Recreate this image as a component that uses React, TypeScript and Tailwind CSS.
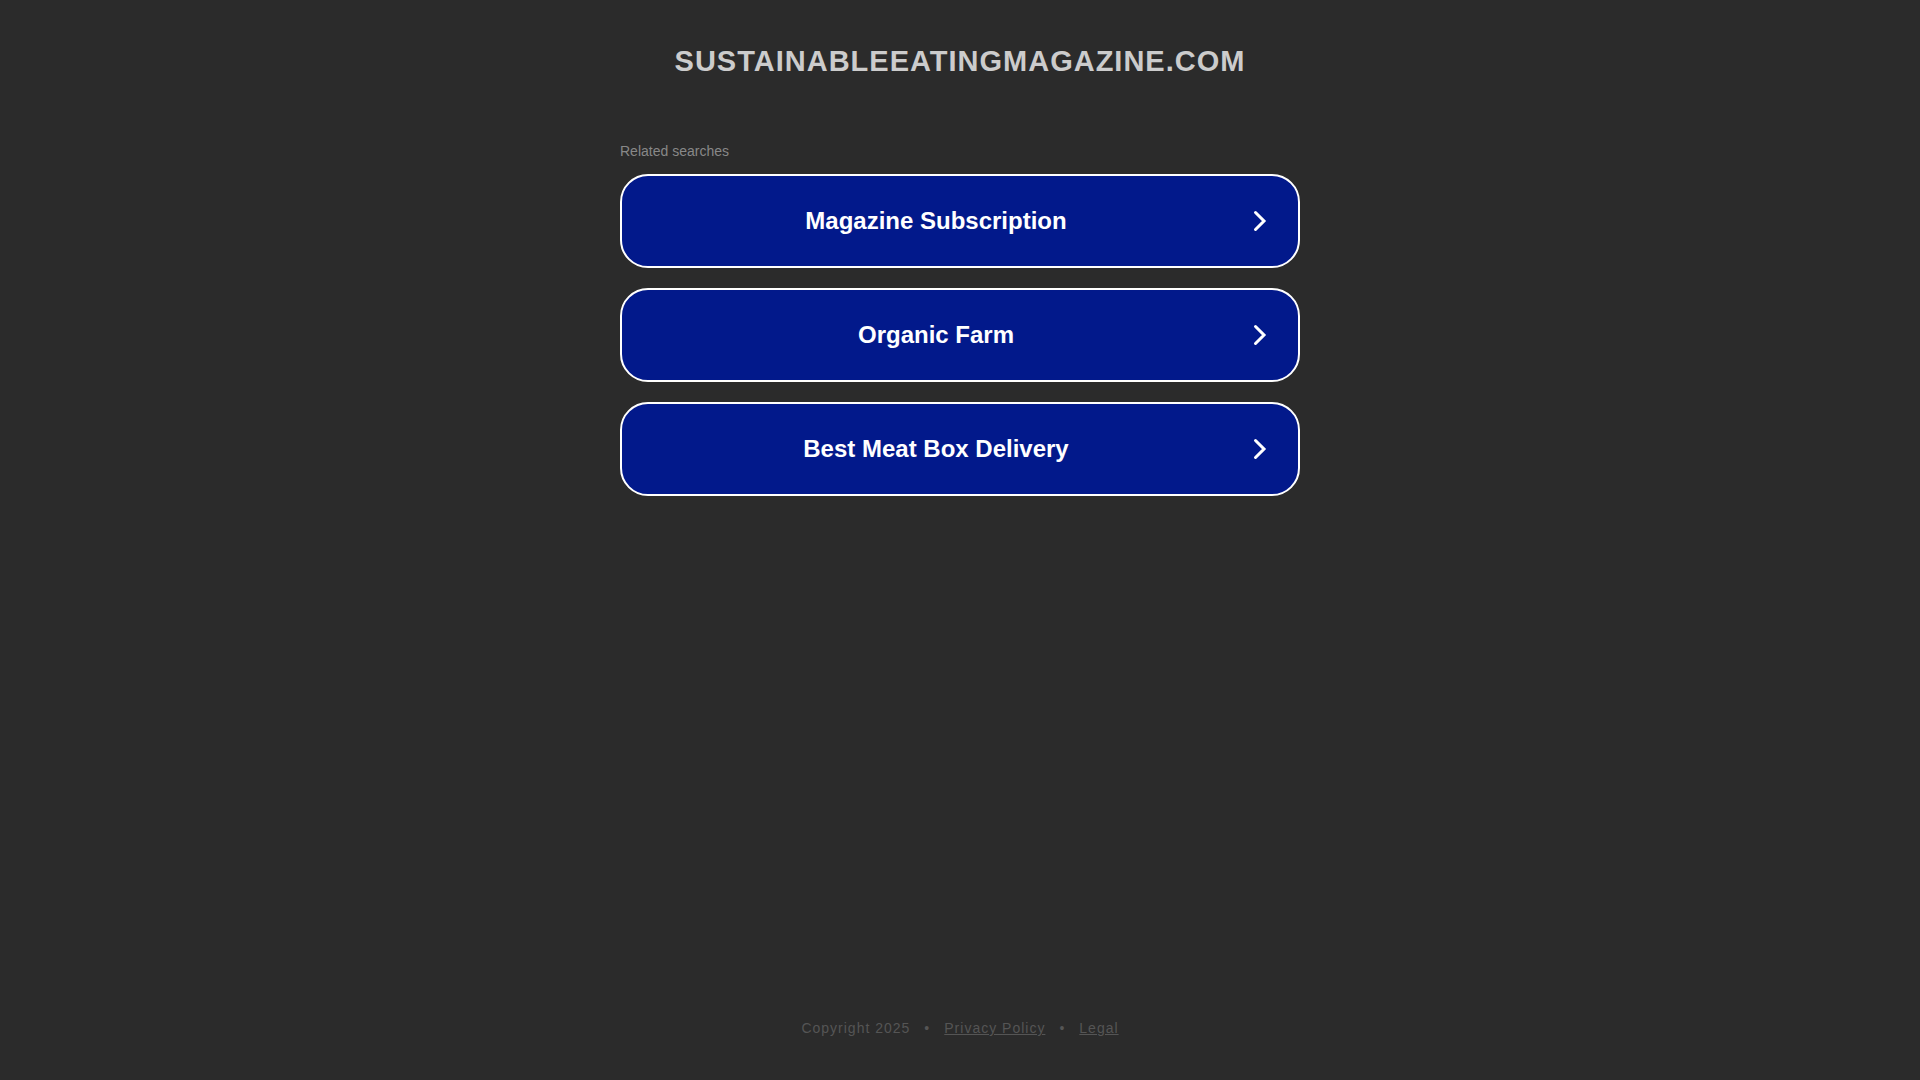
import type { ReactNode } from 'react'

const searches = ['Magazine Subscription', 'Organic Farm', 'Best Meat Box Delivery']

function SearchLink({ children }: { children: ReactNode }) {
  return (
    <a
      href="#"
      className="flex items-center rounded-[28px] border-2 border-white bg-[#02198b] py-[27px] pr-[26px] pl-0.5 text-white"
    >
      <span className="flex-1 text-center text-2xl leading-9 font-bold">{children}</span>
      <svg
        className="h-6 w-6 shrink-0"
        viewBox="0 0 24 24"
        fill="none"
        stroke="currentColor"
        strokeWidth="3"
        strokeLinecap="round"
        aria-hidden="true"
      >
        <path d="M7.5 3.5 16 12l-8.5 8.5" />
      </svg>
    </a>
  )
}

export default function App() {
  return (
    <div className="flex min-h-screen flex-col bg-[#2b2b2b] font-['Liberation_Sans',Arial,sans-serif]">
      <header className="px-4 pt-[41px] text-center">
        <h1 className="text-[29px] leading-10 font-bold tracking-[1px] text-[#cccccc] uppercase">
          sustainableeatingmagazine.com
        </h1>
      </header>
      <main className="mx-auto w-full max-w-[680px] flex-1 pt-15">
        <h2 className="text-sm leading-5 text-[#888888]">Related searches</h2>
        <ul className="mt-[13px] space-y-5">
          {searches.map((search) => (
            <li key={search}>
              <SearchLink>{search}</SearchLink>
            </li>
          ))}
        </ul>
      </main>
      <footer className="flex justify-center gap-3.5 pb-[42px] text-sm tracking-[1px] text-[#555555]">
        <span>Copyright 2025</span>
        <span>•</span>
        <a href="#" className="underline">
          Privacy Policy
        </a>
        <span>•</span>
        <a href="#" className="underline">
          Legal
        </a>
      </footer>
    </div>
  )
}
